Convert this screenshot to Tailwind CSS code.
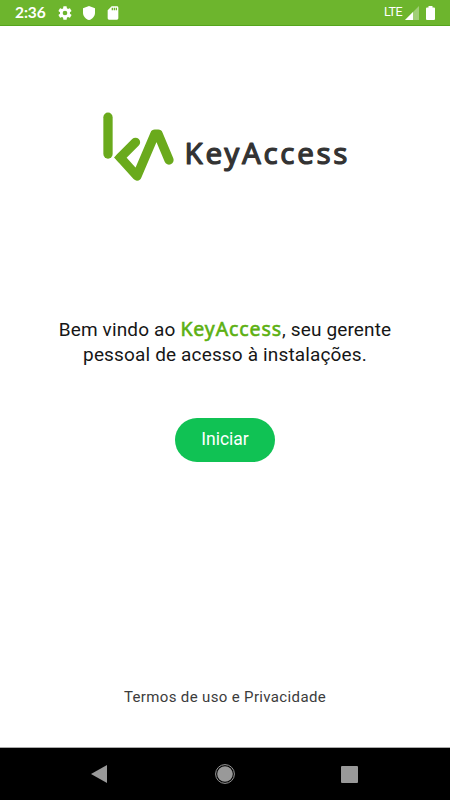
<!DOCTYPE html>
<html lang="pt-BR">
<head>
  <meta charset="UTF-8" />
  <meta name="viewport" content="width=device-width, initial-scale=1.0" />
  <title>KeyAccess</title>
  <script src="https://cdn.jsdelivr.net/npm/@tailwindcss/browser@4"></script>
</head>
<body class="bg-white font-['Roboto',sans-serif]">
  <div class="w-[450px] h-[800px] flex flex-col overflow-hidden">

    <!-- Status bar -->
    <header class="h-[26px] shrink-0 bg-[#6db52d] border-b border-[#55a51c] flex items-center justify-between pl-[15px] pr-[15px] text-white">
      <div class="flex items-center">
        <span class="w-[42px] whitespace-nowrap font-['Lato',sans-serif] font-bold text-[15.5px] leading-none tracking-[-0.1px]">2:36</span>
        <svg class="w-4 h-4" viewBox="0 0 24 24" fill="currentColor"><path d="M19.400 13a7.500 7.500 0 0 0 0-2l2.100-1.650a.5.5 0 0 0 .12-.64l-2-3.460a.5.5 0 0 0-.61-.22l-2.490 1a7.300 7.300 0 0 0-1.690-.98l-.38-2.650A.49.49 0 0 0 14 2h-4a.49.49 0 0 0-.49.42l-.38 2.650c-.61.25-1.170.59-1.690.98l-2.490-1a.5.5 0 0 0-.61.22l-2 3.460a.5.5 0 0 0 .12.64L4.570 11a7.900 7.900 0 0 0 0 2l-2.110 1.650a.5.5 0 0 0-.12.64l2 3.460c.12.22.39.3.61.22l2.490-1c.52.4 1.080.73 1.690.98l.38 2.650c.03.24.24.42.49.42h4c.25 0 .46-.18.49-.42l.38-2.650c.61-.25 1.170-.59 1.690-.98l2.490 1c.23.09.49 0 .61-.22l2-3.460a.5.5 0 0 0-.12-.64zM12 15.500a3.500 3.500 0 1 1 0-7 3.500 3.500 0 0 1 0 7z"/></svg>
        <svg class="ml-2 w-4 h-4" viewBox="0 0 24 24" fill="currentColor"><path d="M12 1.500 3 5v6.500c0 5.200 3.800 9.500 9 11 5.200-1.500 9-5.800 9-11V5z"/></svg>
        <svg class="ml-2 w-4 h-4" viewBox="0 0 24 24" fill="currentColor"><path d="M18 2h-8L4 8v12a2 2 0 0 0 2 2h12a2 2 0 0 0 2-2V4a2 2 0 0 0-2-2zm-6 6h-2V4h2zm3 0h-2V4h2zm3 0h-2V4h2z"/></svg>
      </div>
      <div class="flex items-center">
        <span class="text-[12.5px] leading-none tracking-[-0.5px] mr-[3px]">LTE</span>
        <svg class="w-[14px] h-[14px]" viewBox="0 0 14 14" fill="currentColor"><path opacity=".35" d="M0 14 14 0v14z"/><path d="M0 14 8 6v8z"/></svg>
        <svg class="ml-[7px] w-[9px] h-[14px]" viewBox="0 0 9 14" fill="currentColor"><path d="M2.500 0h4v1.500H8a1 1 0 0 1 1 1V13a1 1 0 0 1-1 1H1a1 1 0 0 1-1-1V2.500a1 1 0 0 1 1-1h1.500z"/></svg>
      </div>
    </header>

    <main class="flex-1 flex flex-col items-center">
      <!-- Logo -->
      <svg class="mt-[74px] w-[270px] h-[90px] shrink-0" viewBox="90 100 270 90">
        <g fill="none" stroke="#6aaa1c" stroke-width="9.3" stroke-linecap="round" stroke-linejoin="round">
          <path d="M108 117.200V154"/>
          <path d="M135.500 142.300 120.300 157.500 137 176 154.800 134.200H158.200L169 160"/>
        </g>
        <path fill="#6aaa1c" d="M114 157.500 119 152.800v9.700z"/>
        <text x="184.500" y="163.500" textLength="163" font-family="Noto Sans" font-weight="400" font-size="29.5" fill="#333" stroke="#333" stroke-width="1.2" stroke-linejoin="round">KeyAccess</text>
      </svg>

      <p class="mt-[127px] text-center text-[19px] leading-[25px] tracking-[0.15px] text-[#161616] whitespace-nowrap">
        Bem vindo ao <span class="font-['Noto_Sans',sans-serif] font-normal text-[19.5px] leading-none tracking-[0.9px] text-[#5cb010] [-webkit-text-stroke:0.6px_#5cb010]">KeyAccess</span>, seu gerente<br>
        pessoal de acesso à instalações.
      </p>

      <button class="mt-[51px] pb-[2px] w-[100px] h-[44px] rounded-full bg-[#10c254] text-white text-[17.5px] tracking-[0px]">Iniciar</button>

      <a class="mt-auto mb-[40px] text-[15px] leading-5 tracking-[0.35px] text-[#3c3c3c]">Termos de uso e Privacidade</a>
    </main>

    <!-- Navigation bar -->
    <nav class="h-[53px] shrink-0 border-t border-[#aaa] bg-black text-[#999] flex items-center justify-between pl-[91px] pr-[92px]">
      <svg class="w-4 h-[18px]" viewBox="0 0 16 18" fill="currentColor"><path d="M0 9 16 0v18z"/></svg>
      <svg class="ml-px w-5 h-5" viewBox="0 0 20 20"><circle cx="10" cy="10" r="9.400" fill="none" stroke="currentColor"/><circle cx="10" cy="10" r="7.800" fill="currentColor"/></svg>
      <div class="w-[17px] h-[17px] rounded-[1px] bg-[#999]"></div>
    </nav>
  </div>
</body>
</html>
